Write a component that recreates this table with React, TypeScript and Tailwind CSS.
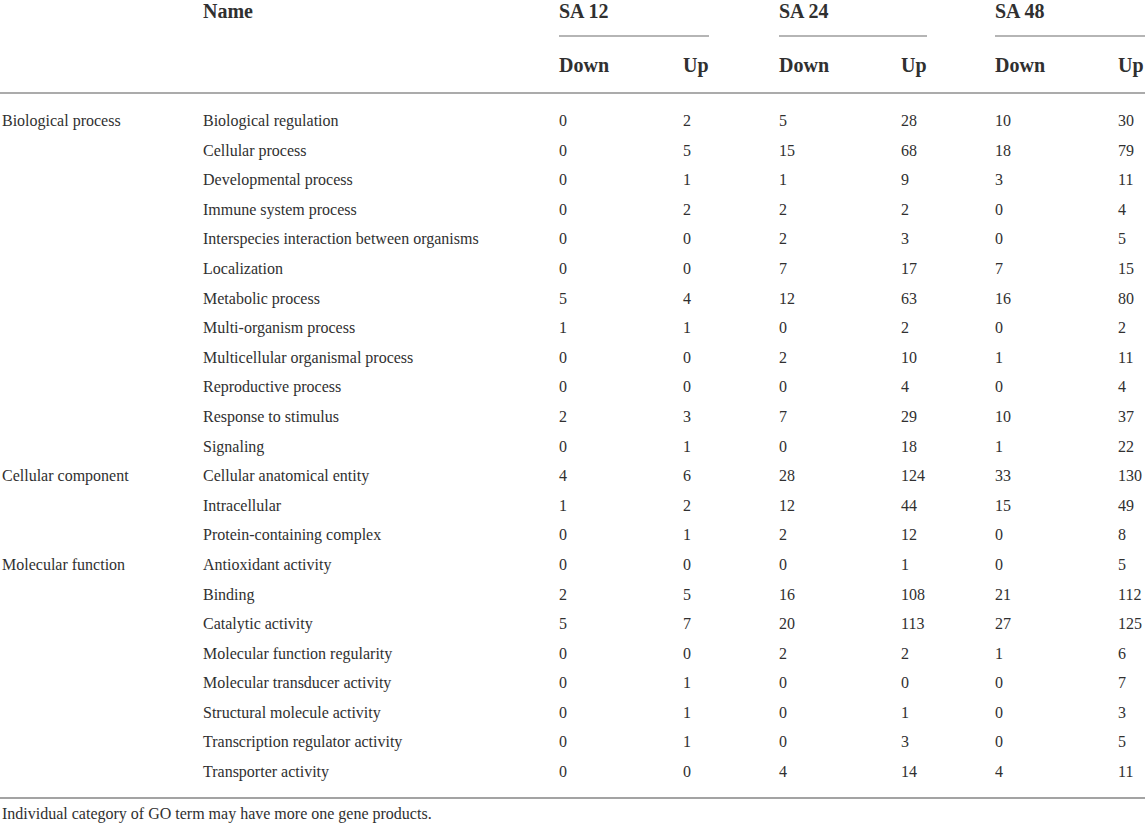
import React from 'react';

type Row = [string, string, number, number, number, number, number, number];

const rows: Row[] = [
  ['Biological process', 'Biological regulation', 0, 2, 5, 28, 10, 30],
  ['', 'Cellular process', 0, 5, 15, 68, 18, 79],
  ['', 'Developmental process', 0, 1, 1, 9, 3, 11],
  ['', 'Immune system process', 0, 2, 2, 2, 0, 4],
  ['', 'Interspecies interaction between organisms', 0, 0, 2, 3, 0, 5],
  ['', 'Localization', 0, 0, 7, 17, 7, 15],
  ['', 'Metabolic process', 5, 4, 12, 63, 16, 80],
  ['', 'Multi-organism process', 1, 1, 0, 2, 0, 2],
  ['', 'Multicellular organismal process', 0, 0, 2, 10, 1, 11],
  ['', 'Reproductive process', 0, 0, 0, 4, 0, 4],
  ['', 'Response to stimulus', 2, 3, 7, 29, 10, 37],
  ['', 'Signaling', 0, 1, 0, 18, 1, 22],
  ['Cellular component', 'Cellular anatomical entity', 4, 6, 28, 124, 33, 130],
  ['', 'Intracellular', 1, 2, 12, 44, 15, 49],
  ['', 'Protein-containing complex', 0, 1, 2, 12, 0, 8],
  ['Molecular function', 'Antioxidant activity', 0, 0, 0, 1, 0, 5],
  ['', 'Binding', 2, 5, 16, 108, 21, 112],
  ['', 'Catalytic activity', 5, 7, 20, 113, 27, 125],
  ['', 'Molecular function regularity', 0, 0, 2, 2, 1, 6],
  ['', 'Molecular transducer activity', 0, 1, 0, 0, 0, 7],
  ['', 'Structural molecule activity', 0, 1, 0, 1, 0, 3],
  ['', 'Transcription regulator activity', 0, 1, 0, 3, 0, 5],
  ['', 'Transporter activity', 0, 0, 4, 14, 4, 11],
];

const cols = 'grid grid-cols-[201px_356px_124px_96px_122px_94px_123px_1fr] pl-[2px]';

export default function App() {
  return (
    <div className="w-[1145px] h-[823px] overflow-hidden bg-white text-[#303030] font-['Liberation_Serif',serif]">
      {/* header */}
      <div className="border-b-2 border-[#ababab] pb-[15px]">
        <div className={`${cols} h-[37px] text-[20px] leading-[22px] font-bold`}>
          <div />
          <div>Name</div>
          <div className="col-span-2 flex flex-col">
            <span>SA 12</span>
            <div className="mt-auto w-[150px] h-[2px] bg-[#b5b5b5]" />
          </div>
          <div className="col-span-2 flex flex-col">
            <span>SA 24</span>
            <div className="mt-auto w-[148px] h-[2px] bg-[#b5b5b5]" />
          </div>
          <div className="col-span-2 flex flex-col">
            <span>SA 48</span>
            <div className="mt-auto w-full h-[2px] bg-[#b5b5b5]" />
          </div>
        </div>
        <div className={`${cols} pt-[16px] text-[20px] leading-[24px] font-bold`}>
          <div />
          <div />
          <div>Down</div>
          <div>Up</div>
          <div>Down</div>
          <div>Up</div>
          <div>Down</div>
          <div>Up</div>
        </div>
      </div>

      {/* body */}
      <div className="pt-[12px] pb-[10px] border-b-2 border-[#a3a3a3] text-[16px]">
        {rows.map((r, i) => (
          <div key={i} className={`${cols} h-[29.6px] leading-[29.6px] whitespace-nowrap`}>
            <div>{r[0]}</div>
            <div>{r[1]}</div>
            {r.slice(2).map((v, j) => (
              <div key={j}>{v}</div>
            ))}
          </div>
        ))}
      </div>

      <p className="pl-[2px] pt-[5px] text-[16px] leading-[20px]">
        Individual category of GO term may have more one gene products.
      </p>
    </div>
  );
}
